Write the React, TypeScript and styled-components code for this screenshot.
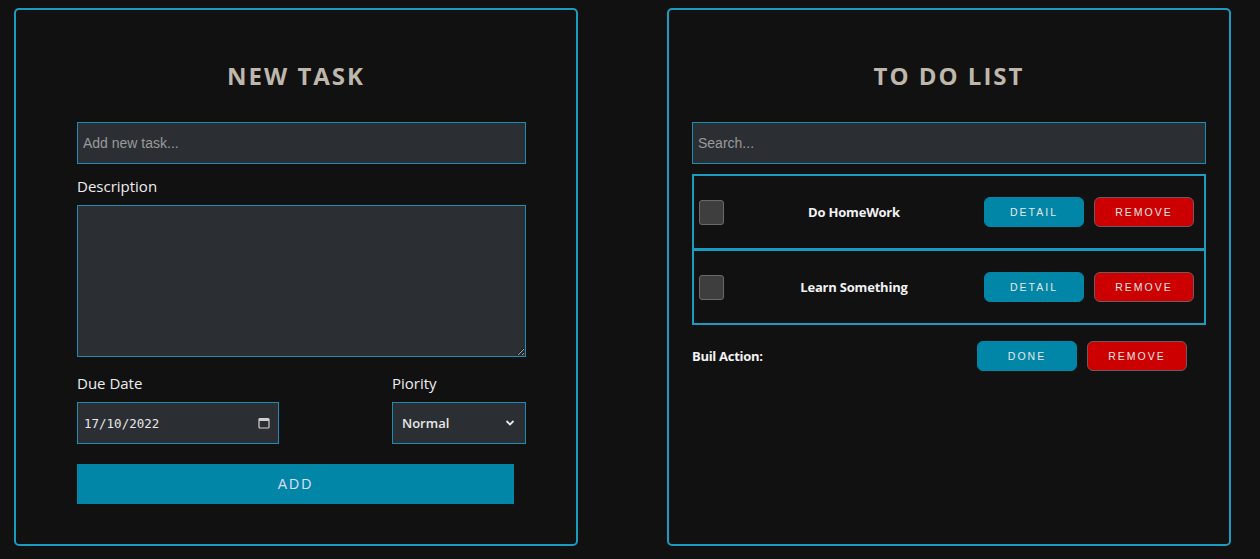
import React from "react";
import styled, { createGlobalStyle } from "styled-components";

const Global = createGlobalStyle`
  html, body { margin: 0; padding: 0; background: #111112; }
  body { font-family: "Open Sans", "Noto Sans", sans-serif; color: #eee; }
  * { box-sizing: border-box; }
`;

const Page = styled.div`
  display: flex;
  gap: 89px;
  padding: 8px 0 0 14px;
  height: 559px;
`;

const Panel = styled.section<{ $padX: number }>`
  width: 564px;
  height: 538px;
  border: 2px solid #1a9bbf;
  border-radius: 5px;
  padding: 50px ${(p) => p.$padX}px 0;
  display: flex;
  flex-direction: column;
`;

const Title = styled.h2`
  margin: 0 0 30px;
  text-align: center;
  font-family: "Open Sans", sans-serif;
  font-weight: 700;
  font-size: 24px;
  letter-spacing: 2px;
  line-height: 32px;
  color: #beb7ab;
`;

const Form = styled.div`
  width: 449px;
  margin-left: 61px;
  display: flex;
  flex-direction: column;
`;

const TextInput = styled.input<{ $w?: number }>`
  width: ${(p) => (p.$w ? `${p.$w}px` : "100%")};
  height: 42px;
  background: #2b2f33;
  border: 1px solid #1c8db0;
  padding: 0 5px;
  font-family: "Liberation Sans", Arial, sans-serif;
  font-size: 14px;
  color: #ddd;
  outline: none;
  &::placeholder { color: #9a9a9a; }
`;

const Label = styled.label<{ $top?: number }>`
  display: block;
  font-family: "Open Sans", sans-serif;
  font-size: 15px;
  color: #eeeeee;
  line-height: 20px;
  margin: ${(p) => p.$top ?? 12}px 0 9px;
`;

const TextArea = styled.textarea`
  width: 100%;
  height: 152px;
  background: #2b2f33;
  border: 1px solid #1c8db0;
  outline: none;
  display: block;
  color: #ddd;
`;

const Row = styled.div`
  display: flex;
  justify-content: space-between;
`;

const Field = styled.div<{ $w: number }>`
  width: ${(p) => p.$w}px;
  display: flex;
  flex-direction: column;
`;

const Control = styled.div`
  position: relative;
  height: 42px;
`;

const DateText = styled.input`
  width: 100%;
  height: 42px;
  background: #2b2f33;
  border: 1px solid #1c8db0;
  padding: 0 6px;
  font-family: "DejaVu Sans Mono", "Liberation Mono", monospace;
  font-size: 12.5px;
  color: #e8e8e8;
  outline: none;
`;

const IconSlot = styled.span<{ $right: number }>`
  position: absolute;
  right: ${(p) => p.$right}px;
  top: 50%;
  transform: translateY(-50%);
  display: flex;
  pointer-events: none;
`;

const Select = styled.select`
  width: 100%;
  height: 42px;
  appearance: none;
  background: #2b2f33;
  border: 1px solid #1c8db0;
  padding: 0 9px;
  font-family: "Open Sans", sans-serif;
  font-size: 13px;
  font-weight: 600;
  color: #e8e8e8;
  outline: none;
`;

const AddButton = styled.button`
  width: 437px;
  height: 40px;
  margin-top: 20px;
  background: #0286a8;
  border: none;
  font-family: "Liberation Sans", Arial, sans-serif;
  font-size: 14px;
  letter-spacing: 2px;
  color: #dde;
`;

const List = styled.div`
  display: flex;
  flex-direction: column;
  margin-top: 10px;
`;

const TaskRow = styled.div`
  height: 76px;
  border: 2px solid #1a9bbf;
  display: flex;
  align-items: center;
  padding: 0 10px 0 5px;
  margin-top: -1px;
  &:first-child { margin-top: 0; }
`;

const Check = styled.input`
  appearance: none;
  width: 25px;
  height: 25px;
  margin: 0;
  background: #3e3e3e;
  border: 1px solid #6a6a6a;
  border-radius: 3px;
`;

const TaskName = styled.div`
  flex: 1;
  text-align: center;
  font-family: "Open Sans", sans-serif;
  font-weight: 700;
  font-size: 13px;
  color: #f2f2f2;
  letter-spacing: -0.2px;
`;

const Actions = styled.div`
  display: flex;
  gap: 10px;
`;

const SmallButton = styled.button<{ $kind: "blue" | "red" }>`
  width: 100px;
  height: 30px;
  border-radius: 6px;
  border: 1px solid ${(p) => (p.$kind === "blue" ? "#0286a8" : "#6e5a60")};
  background: ${(p) => (p.$kind === "blue" ? "#0286a8" : "#cc0000")};
  font-family: "Liberation Sans", Arial, sans-serif;
  font-size: 10.5px;
  letter-spacing: 2px;
  color: #e6e6e6;
  padding: 0;
`;

const Bulk = styled.div`
  display: flex;
  align-items: center;
  justify-content: space-between;
  margin-top: 16px;
  padding-right: 19px;
`;

const BulkLabel = styled.span`
  font-family: "Open Sans", sans-serif;
  font-weight: 700;
  font-size: 13px;
  color: #f2f2f2;
  letter-spacing: -0.3px;
`;

const CalendarIcon = () => (
  <svg width="12" height="12" viewBox="0 0 12 12" fill="none">
    <rect x="1" y="1.5" width="10" height="9.5" rx="1" stroke="#cfcfcf" strokeWidth="1.2" />
    <rect x="1" y="1.5" width="10" height="2.5" fill="#cfcfcf" />
  </svg>
);

const Chevron = () => (
  <svg width="10" height="7" viewBox="0 0 10 7" fill="none">
    <path d="M1.5 1.5 L5 5 L8.5 1.5" stroke="#e8e8e8" strokeWidth="1.8" />
  </svg>
);

const tasks = ["Do HomeWork", "Learn Something"];

export default function App() {
  return (
    <>
      <Global />
      <Page>
        <Panel $padX={0}>
          <Title>NEW TASK</Title>
          <Form>
            <TextInput placeholder="Add new task..." />
            <Label>Description</Label>
            <TextArea />
            <Row>
              <Field $w={202}>
                <Label $top={16}>Due Date</Label>
                <Control>
                  <DateText readOnly value="17/10/2022" />
                  <IconSlot $right={9}>
                    <CalendarIcon />
                  </IconSlot>
                </Control>
              </Field>
              <Field $w={134}>
                <Label $top={16}>Piority</Label>
                <Control>
                  <Select defaultValue="Normal">
                    <option>Low</option>
                    <option>Normal</option>
                    <option>High</option>
                  </Select>
                  <IconSlot $right={11}>
                    <Chevron />
                  </IconSlot>
                </Control>
              </Field>
            </Row>
            <AddButton>ADD</AddButton>
          </Form>
        </Panel>
        <Panel $padX={23}>
          <Title>TO DO LIST</Title>
          <TextInput placeholder="Search..." />
          <List>
            {tasks.map((t) => (
              <TaskRow key={t}>
                <Check type="checkbox" />
                <TaskName>{t}</TaskName>
                <Actions>
                  <SmallButton $kind="blue">DETAIL</SmallButton>
                  <SmallButton $kind="red">REMOVE</SmallButton>
                </Actions>
              </TaskRow>
            ))}
          </List>
          <Bulk>
            <BulkLabel>Buil Action:</BulkLabel>
            <Actions>
              <SmallButton $kind="blue">DONE</SmallButton>
              <SmallButton $kind="red">REMOVE</SmallButton>
            </Actions>
          </Bulk>
        </Panel>
      </Page>
    </>
  );
}
